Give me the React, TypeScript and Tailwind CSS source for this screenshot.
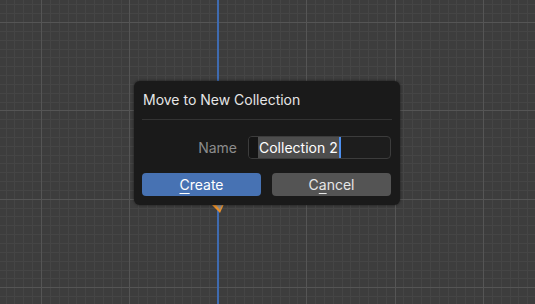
import React from "react";

function Viewport() {
  const W = 535;
  const H = 304;
  const step = 8.84;
  const xs: { p: number; major: boolean }[] = [];
  for (let k = -5; k < 60; k++) {
    const p = Math.round(41 + k * step);
    if (p >= 0 && p <= W) xs.push({ p, major: ((k % 10) + 10) % 10 === 0 });
  }
  const ys: { p: number; major: boolean }[] = [];
  for (let k = -3; k < 35; k++) {
    const p = Math.round(22 + k * step);
    if (p >= 0 && p <= H) ys.push({ p, major: ((k % 10) + 10) % 10 === 0 });
  }
  return (
    <svg width={W} height={H} className="block" shapeRendering="crispEdges">
      <rect width={W} height={H} fill="#3d3d3d" />
      {xs.filter((l) => !l.major).map((l) => (
        <rect key={"vx" + l.p} x={l.p} y={0} width={1} height={H} fill="#454545" />
      ))}
      {ys.filter((l) => !l.major).map((l) => (
        <rect key={"hy" + l.p} x={0} y={l.p} width={W} height={1} fill="#454545" />
      ))}
      {xs.filter((l) => l.major).map((l) => (
        <rect key={"Vx" + l.p} x={l.p} y={0} width={1} height={H} fill="#555555" />
      ))}
      {ys.filter((l) => l.major).map((l) => (
        <rect key={"Hy" + l.p} x={0} y={l.p} width={W} height={1} fill="#555555" />
      ))}
      <rect x={217} y={0} width={2} height={H} fill="#3f6bb0" />
      <g shapeRendering="geometricPrecision">
        <polygon points="211,204 224,204 220,213" fill="#e88f2a" />
        <polygon points="216,205 222,205 220,210" fill="#8a8a8a" />
      </g>
    </svg>
  );
}

export default function App() {
  return (
    <div
      className="relative w-[535px] h-[304px] overflow-hidden bg-[#3d3d3d]"
      style={{ fontFamily: "Inter, 'Noto Sans', sans-serif" }}
    >
      <Viewport />
      <div className="absolute left-[134px] top-[81px] w-[266px] h-[124px] rounded-[6px] bg-[#1a1a1a] shadow-[0_0_3px_rgba(0,0,0,0.6)] px-[8px] flex flex-col">
        <div className="mt-[9px] h-[20px] leading-[20px] text-[14px] text-[#e6e6e6] pl-[1px]">
          Move to New Collection
        </div>
        <div className="mt-[9px] h-[1px] bg-[#333333]" />
        <div className="mt-[16px] flex items-center h-[23px]">
          <div className="w-[95px] text-right text-[14px] text-[#8c8c8c]">Name</div>
          <div className="ml-[11px] w-[143px] h-[23px] rounded-[4px] border border-[#3c3c3c] bg-[#1d1d1d] flex items-stretch overflow-hidden">
            <div className="w-[9px] bg-[#151515]" />
            <div className="bg-[#4d4d4d] text-[14px] text-white leading-[21px] pl-[1px] pr-[1px]">
              Collection 2
            </div>
            <div className="w-[2px] bg-[#4c8ff0]" />
          </div>
        </div>
        <div className="mt-[14px] flex gap-[11px]">
          <div className="w-[119px] h-[23px] rounded-[4px] bg-[#4772b3] text-[14px] text-white flex items-center justify-center">
            <span>
              <span className="underline underline-offset-[3px] decoration-1">C</span>reate
            </span>
          </div>
          <div className="w-[119px] h-[23px] rounded-[4px] bg-[#545454] text-[14px] text-[#e6e6e6] flex items-center justify-center">
            <span>
              C<span className="underline underline-offset-[3px] decoration-1">a</span>ncel
            </span>
          </div>
        </div>
      </div>
    </div>
  );
}
